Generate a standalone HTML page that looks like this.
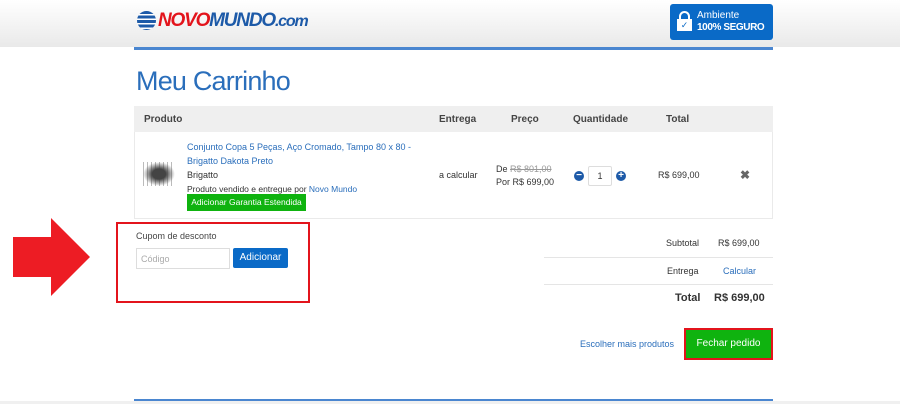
<!DOCTYPE html>
<html><head><meta charset="utf-8"><style>
*{margin:0;padding:0;box-sizing:border-box}
body{width:900px;height:404px;overflow:hidden;background:#fff;font-family:"Liberation Sans",sans-serif;position:relative;color:#333}
.hdr{position:absolute;left:0;top:0;width:900px;height:47px;background:linear-gradient(#fff,#e9e9e9)}
.abs{position:absolute}
a{color:#2a6ebb;text-decoration:none}
</style></head><body>
<div class="hdr"></div>
<div class="abs" style="left:137px;top:11px;width:19px;height:19px;border-radius:50%;background:repeating-linear-gradient(#1d5aa8 0 3px,#fff 3px 4.5px)"></div>
<div class="abs" style="left:158px;top:10px;font-size:19px;font-weight:bold;font-style:italic;letter-spacing:-1.2px"><span style="color:#e3141c">NOVO</span><span style="color:#1d5aa8">MUNDO</span><span style="color:#1d5aa8;font-size:16px">.com</span></div>
<div class="abs" style="left:670px;top:4px;width:103px;height:36px;background:#0a6ac7;border-radius:3px;color:#fff">
 <div class="abs" style="left:9px;top:7px;width:11px;height:8px;border:2px solid #fff;border-bottom:none;border-radius:6px 6px 0 0"></div>
 <div class="abs" style="left:7px;top:15px;width:15px;height:12px;background:#fff;color:#0a6ac7;font-size:9px;text-align:center;line-height:12px">✓</div>
 <div class="abs" style="left:27px;top:6px;font-size:10px;white-space:nowrap">Ambiente</div>
 <div class="abs" style="left:27px;top:18px;font-size:10px;font-weight:bold;white-space:nowrap;letter-spacing:-0.4px">100% SEGURO</div>
</div>
<div class="abs" style="left:134px;top:47px;width:639px;height:3px;background:#4a86d0"></div>
<div class="abs" style="left:136px;top:66px;font-size:27px;color:#2a6ebb;letter-spacing:-0.8px">Meu Carrinho</div>
<div class="abs" style="left:134px;top:106px;width:639px;height:113px;border:1px solid #eaeaea;background:#fff"></div>
<div class="abs" style="left:134px;top:106px;width:639px;height:26px;background:#efefef;font-size:10px;font-weight:bold;color:#444">
 <span class="abs" style="left:10px;top:8px">Produto</span>
 <span class="abs" style="left:305px;top:8px">Entrega</span>
 <span class="abs" style="left:377px;top:8px">Preço</span>
 <span class="abs" style="left:439px;top:8px">Quantidade</span>
 <span class="abs" style="left:532px;top:8px">Total</span>
</div>
<div class="abs" style="left:143px;top:162px;width:32px;height:24px;background:radial-gradient(#444 30%,transparent 70%),repeating-linear-gradient(90deg,#bbb 0 1px,#fff 1px 4px)"></div>
<div class="abs" style="left:187px;top:140px;font-size:9px;line-height:14px;color:#333">
<a>Conjunto Copa 5 Peças, Aço Cromado, Tampo 80 x 80 -<br>Brigatto Dakota Preto</a><br>Brigatto<br><span style="font-size:8.5px">Produto vendido e entregue por <a>Novo Mundo</a></span></div>
<div class="abs" style="left:187px;top:194px;width:119px;height:17px;background:#0fb30f;color:#fff;font-size:8.5px;line-height:17px;text-align:center">Adicionar Garantia Estendida</div>
<div class="abs" style="left:439px;top:170px;font-size:9px">a calcular</div>
<div class="abs" style="left:496px;top:163px;font-size:9px;line-height:13px">De <s style="color:#999">R$ 801,00</s><br>Por R$ 699,00</div>
<div class="abs" style="left:574px;top:171px;width:10px;height:10px;border-radius:50%;background:#1d5aa8;color:#fff;font-size:10px;line-height:9px;text-align:center;font-weight:bold">−</div>
<div class="abs" style="left:588px;top:166px;width:24px;height:20px;border:1px solid #ddd;border-radius:2px;font-size:9px;text-align:center;line-height:18px">1</div>
<div class="abs" style="left:616px;top:171px;width:10px;height:10px;border-radius:50%;background:#1d5aa8;color:#fff;font-size:10px;line-height:10px;text-align:center;font-weight:bold">+</div>
<div class="abs" style="left:658px;top:170px;font-size:9px">R$ 699,00</div>
<div class="abs" style="left:740px;top:168px;font-size:12px;color:#666;font-weight:bold">✖</div>
<svg class="abs" style="left:0;top:200px" width="100" height="120"><polygon points="13,37 51,37 51,18 90,57 51,96 51,77 13,77" fill="#ed1c24"/></svg>
<div class="abs" style="left:116px;top:222px;width:194px;height:81px;border:2px solid #e3141c"></div>
<div class="abs" style="left:136px;top:231px;font-size:9px;color:#444">Cupom de desconto</div>
<div class="abs" style="left:136px;top:248px;width:94px;height:21px;border:1px solid #ddd;font-size:9px;color:#aaa;padding:5px 4px">Código</div>
<div class="abs" style="left:233px;top:248px;width:55px;height:20px;background:#0a6ac7;color:#fff;font-size:10px;line-height:20px;text-align:center;border-radius:2px">Adicionar</div>
<div class="abs" style="left:666px;top:238px;font-size:9px">Subtotal</div>
<div class="abs" style="left:718px;top:238px;font-size:9px">R$ 699,00</div>
<div class="abs" style="left:544px;top:257px;width:229px;height:1px;background:#e5e5e5"></div>
<div class="abs" style="left:667px;top:266px;font-size:9px">Entrega</div>
<div class="abs" style="left:723px;top:266px;font-size:9px"><a>Calcular</a></div>
<div class="abs" style="left:544px;top:284px;width:229px;height:1px;background:#e5e5e5"></div>
<div class="abs" style="left:675px;top:292px;font-size:11px;font-weight:bold">Total</div>
<div class="abs" style="left:714px;top:292px;font-size:11px;font-weight:bold">R$ 699,00</div>
<div class="abs" style="left:580px;top:339px;font-size:9px"><a>Escolher mais produtos</a></div>
<div class="abs" style="left:684px;top:328px;width:89px;height:32px;border:2px solid #e3141c;background:#0fb30f;color:#fff;font-size:10px;line-height:28px;text-align:center">Fechar pedido</div>
<div class="abs" style="left:134px;top:399px;width:639px;height:2px;background:#4a86d0"></div>
<div class="abs" style="left:0;top:401px;width:900px;height:3px;background:#f0f0f0"></div>
</body></html>
